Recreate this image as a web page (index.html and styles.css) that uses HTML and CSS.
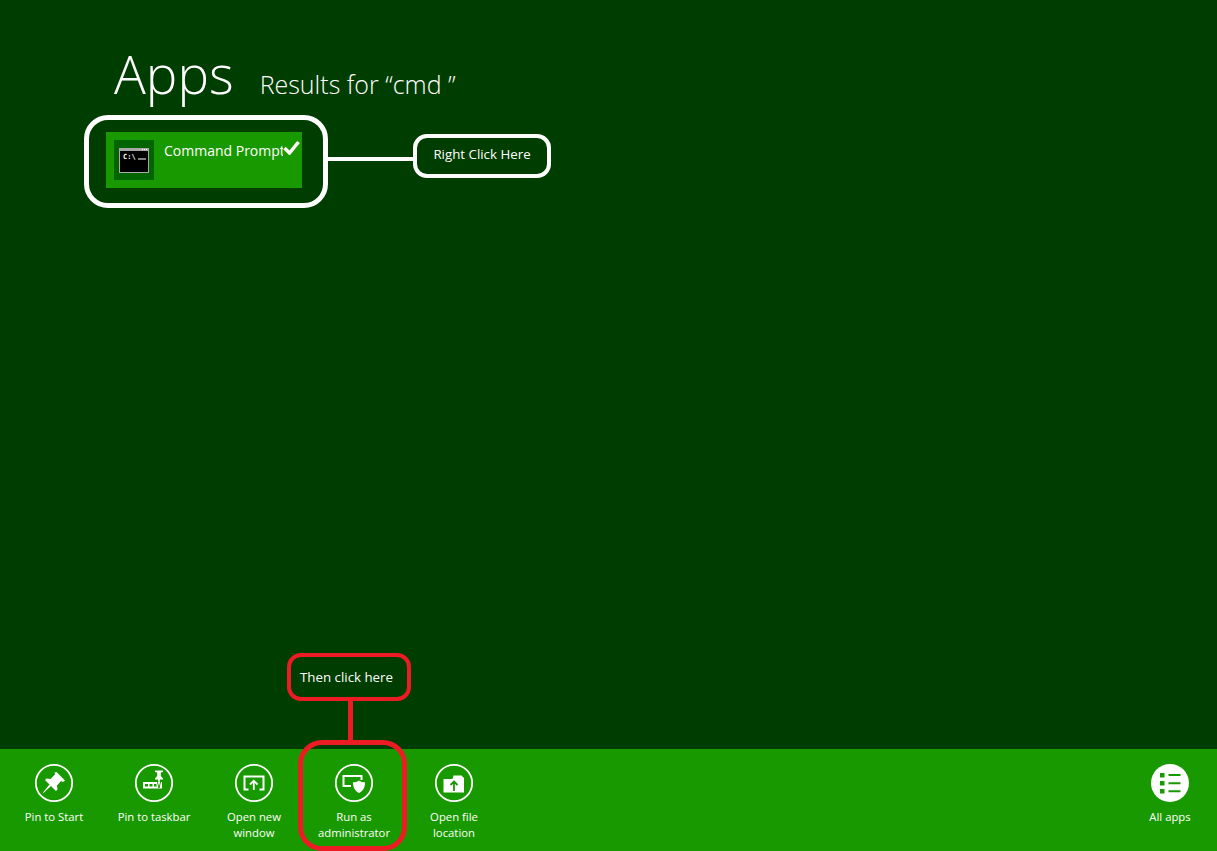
FILE: index.html
```html
<!DOCTYPE html>
<html lang="en">
<head>
    <meta charset="UTF-8">
    <title>Apps - Results for cmd</title>
    <link rel="stylesheet" href="styles.css">
</head>
<body>

    <main class="results">
        <header class="results-head">
            <h1>Apps</h1>
            <h2>Results for “cmd ”</h2>
        </header>

        <div class="tile">
            <div class="tile-icon">
                <svg width="30" height="25" viewBox="0 0 30 25">
                    <rect x="0" y="0" width="30" height="25" fill="#a8a8a8"/>
                    <rect x="1" y="3" width="28" height="21" fill="#000"/>
                    <path d="M23 1.500h1M25 1.500h1M27 1.500h1" stroke="#fff" stroke-width="1"/>
                    <text x="4" y="11" class="cmd-prompt">C:\</text>
                    <rect x="19" y="10.500" width="8" height="1" fill="#fff"/>
                </svg>
            </div>
            <span class="tile-name">Command Prompt</span>
            <svg class="tile-check" width="17" height="15" viewBox="0 0 17 15">
                <path d="M1.500 8l5 5L15.500 2" fill="none" stroke="#fff" stroke-width="3.500"/>
            </svg>
        </div>
    </main>

    <footer class="appbar">
        <div class="appbar-left">
            <div class="command">
                <svg class="command-icon" viewBox="0 0 40 40">
                    <circle cx="20" cy="20" r="18.200" fill="none" stroke="#fff" stroke-width="1.800"/>
                    <path d="M22.500 9l8.500 8.500-2 1.500-2-1-4 4.500 0.500 4-1.500 1.500-5-5-7.500 7-.5-.5 6.500-8-4.500-4.500 1.500-1.500 4 0.500 4.500-4.500-0.500-2z" fill="#fff"/>
                </svg>
                <span>Pin to Start</span>
            </div>
            <div class="command">
                <svg class="command-icon" viewBox="0 0 40 40">
                    <circle cx="20" cy="20" r="18.200" fill="none" stroke="#fff" stroke-width="1.800"/>
                    <path fill-rule="evenodd" d="M9 19h19v6.500H9zM11 21v2.500h3V21zM15.500 21v2.500h3V21zM20 21v2.500h2.500V21z" fill="#fff"/>
                    <path d="M23.500 19l1.500 6 1.500-6" fill="none" stroke="#199900" stroke-width="1"/>
                    <path d="M21 7.500h8V9l-2.200.5 0 3.500 2.200 2.500 0 1h-3l-1 6-1-6h-3v-1l2.200-2.500 0-3.500L21 9z" fill="#fff"/>
                </svg>
                <span>Pin to taskbar</span>
            </div>
            <div class="command">
                <svg class="command-icon" viewBox="0 0 40 40">
                    <circle cx="20" cy="20" r="18.200" fill="none" stroke="#fff" stroke-width="1.800"/>
                    <path d="M14.500 26.500h-4v-13h19v13h-4" fill="none" stroke="#fff" stroke-width="2"/>
                    <path d="M19.800 27v-9M16 21.500l3.800-3.800 3.800 3.800" fill="none" stroke="#fff" stroke-width="1.800"/>
                </svg>
                <span>Open new<br>window</span>
            </div>
            <div class="command">
                <svg class="command-icon" viewBox="0 0 40 40">
                    <circle cx="20" cy="20" r="18.200" fill="none" stroke="#fff" stroke-width="1.800"/>
                    <path d="M17 23h-7.500V13h18v4" fill="none" stroke="#fff" stroke-width="2"/>
                    <path d="M25 17.500c1.800 1.300 3.800 1.800 6 1.800 0 5.400-2 8.700-6 10.700-4-2-6-5.300-6-10.700 2.200 0 4.200-.5 6-1.800z" fill="#fff"/>
                </svg>
                <span>Run as<br>administrator</span>
            </div>
            <div class="command">
                <svg class="command-icon" viewBox="0 0 40 40">
                    <circle cx="20" cy="20" r="18.200" fill="none" stroke="#fff" stroke-width="1.800"/>
                    <path d="M9.500 16h9l1-3.500h8l2.500 2.500v14.500H9.500z" fill="#fff"/>
                    <path d="M20 28v-9M16.500 22l3.500-3.500 3.500 3.500" fill="none" stroke="#199900" stroke-width="1.800"/>
                </svg>
                <span>Open file<br>location</span>
            </div>
        </div>
        <div class="command">
            <svg class="command-icon" viewBox="0 0 40 40">
                <circle cx="20" cy="20" r="19" fill="#fff"/>
                <path d="M10 10h4.500v4.500H10zM10 18h4.500v4.500H10zM10 26h4.500v4.500H10z" fill="#199900"/>
                <path d="M18.500 12h12M18.500 20.200h12M18.500 28.200h12" stroke="#199900" stroke-width="2"/>
            </svg>
            <span>All apps</span>
        </div>
    </footer>

    <!-- annotations drawn over the screenshot -->
    <div class="note-ring note-ring-tile"></div>
    <div class="note-line note-line-tile"></div>
    <div class="note-label note-label-white">Right Click Here</div>
    <div class="note-label note-label-red">Then click here</div>
    <div class="note-line note-line-red"></div>
    <div class="note-ring note-ring-admin"></div>

</body>
</html>
```

FILE: styles.css
```css
/* page */
html, body {
    height: 100%;
}

body {
    margin: 0;
    position: relative;
    display: flex;
    flex-direction: column;
    height: 851px;
    overflow: hidden;
    background-color: #003d00;
    color: #fff;
    font-family: "Open Sans", "Noto Sans", sans-serif;
}

/* search results */
.results {
    flex: 1;
    padding: 38px 0 0 106px;
}

.results-head {
    display: flex;
    align-items: baseline;
    gap: 26px;
    height: 94px;
    padding-left: 8px;
}

.results-head h1 {
    margin: 0;
    font-size: 53px;
    font-weight: 300;
    line-height: 72px;
}

.results-head h2 {
    margin: 0;
    font-size: 25px;
    font-weight: 300;
}

.tile {
    display: flex;
    align-items: flex-start;
    width: 196px;
    height: 56px;
    padding: 8px 0 8px 8px;
    box-sizing: border-box;
    background-color: #199900;
}

.tile-icon {
    display: flex;
    align-items: center;
    justify-content: center;
    flex: none;
    width: 40px;
    height: 40px;
    background-color: #006400;
}

.cmd-prompt {
    fill: #fff;
    font-family: "DejaVu Sans Mono", monospace;
    font-size: 7px;
    font-weight: bold;
}

.tile-name {
    flex: none;
    width: 119px;
    margin: 1px 0 0 10px;
    overflow: hidden;
    white-space: nowrap;
    font-size: 14px;
    line-height: 20px;
}

.tile-check {
    flex: none;
}

/* app bar */
.appbar {
    display: flex;
    justify-content: space-between;
    flex: none;
    height: 102px;
    padding: 14px 0 0 4px;
    box-sizing: border-box;
    background-color: #199900;
}

.appbar-left {
    display: flex;
}

.command {
    display: flex;
    flex-direction: column;
    align-items: center;
    width: 100px;
    font-size: 11.300px;
    line-height: 16px;
    text-align: center;
}

.appbar > .command {
    margin-right: -3px;
}

.command-icon {
    width: 40px;
    height: 40px;
    margin-bottom: 6px;
}

/* annotations */
.note-ring,
.note-label,
.note-line {
    position: absolute;
    box-sizing: border-box;
}

.note-ring {
    border: 5px solid #fff;
}

.note-ring-tile {
    left: 84px;
    top: 115px;
    width: 244px;
    height: 93px;
    border-radius: 24px;
}

.note-ring-admin {
    left: 298px;
    top: 740px;
    width: 109px;
    height: 111px;
    border-color: #ed1c24;
    border-radius: 24px;
}

.note-label {
    display: flex;
    align-items: center;
    justify-content: center;
    border: 4px solid #fff;
    font-size: 13.300px;
}

.note-label-white {
    left: 413px;
    top: 134px;
    width: 138px;
    height: 44px;
    padding-bottom: 4px;
    border-radius: 14px;
}

.note-label-red {
    left: 287px;
    top: 653px;
    width: 124px;
    height: 48px;
    padding-right: 5px;
    border-color: #ed1c24;
    border-radius: 14px;
}

.note-line-tile {
    left: 328px;
    top: 157px;
    width: 86px;
    height: 4px;
    background-color: #fff;
}

.note-line-red {
    left: 348px;
    top: 700px;
    width: 5px;
    height: 41px;
    background-color: #ed1c24;
}
```
